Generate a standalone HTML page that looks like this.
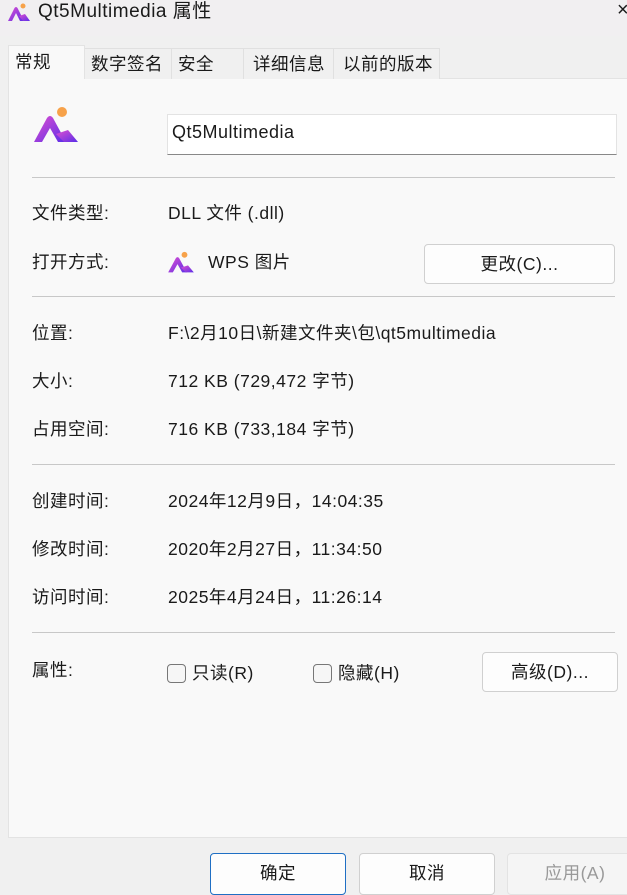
<!DOCTYPE html>
<html><head><meta charset="utf-8"><style>
*{margin:0;padding:0;box-sizing:border-box}
body{width:627px;height:892px;overflow:hidden;background:#f0f0f0;font-family:"Liberation Sans","Noto Sans CJK SC",sans-serif;font-size:17.5px;letter-spacing:0.5px;color:#1a1a1a;position:relative}
.a{position:absolute;white-space:nowrap;line-height:22px}
.title{left:0;top:0;width:627px;height:36px;background:#f1eff1}
.tab{position:absolute;top:48px;height:31px;border:1px solid #e0e0e0;border-bottom:none;background:#f0f0f0;font-size:17.5px;padding:4px 0 0 6px;line-height:22px}
.panel{left:8px;top:78px;width:630px;height:760px;background:#f9f9f9;border:1px solid #e3e3e3}
.hr{position:absolute;left:32px;width:583px;height:1px;background:#c8c8c8}
.btn{position:absolute;background:#fdfdfd;border:1px solid #d0d0d0;border-radius:4px;text-align:center;line-height:22px}
.cb{position:absolute;width:19px;height:19px;border:1px solid #777;border-radius:4px;background:#f6f6f6}
</style></head><body>
<div class="a title"></div>
<svg class="a" style="left:6px;top:3px" width="26" height="20" viewBox="0 0 48 40"><defs><linearGradient id="g" x1="0" y1="0" x2="1" y2="1"><stop offset="0" stop-color="#e04fd0"/><stop offset="1" stop-color="#5b2ee8"/></linearGradient></defs><path d="M2 36 L15 10 Q18 6 21 10 L34 36 L26 36 L18 20 L10 36Z" fill="url(#g)"/><path d="M24 26 L36 22 L46 36 L32 36Z" fill="url(#g)"/><circle cx="32" cy="6" r="5" fill="#f7a24a"/></svg>
<div class="a" style="left:38px;top:1px;font-size:19px">Qt5Multimedia 属性</div>
<div class="a" style="left:617px;top:-1px;font-size:20px">×</div>
<div class="a panel"></div>
<div class="tab" style="left:8px;top:45px;width:77px;height:34px;background:#f9f9f9;z-index:2;padding-top:5px;border-color:#e3e3e3">常规</div>
<div class="tab" style="left:84px;width:88px">数字签名</div>
<div class="tab" style="left:171px;width:73px">安全</div>
<div class="tab" style="left:243px;width:91px;padding-left:9px">详细信息</div>
<div class="tab" style="left:333px;width:107px;padding-left:9px">以前的版本</div>
<svg class="a" style="left:32px;top:106px" width="48" height="40" viewBox="0 0 48 40"><defs><linearGradient id="g2" x1="0" y1="0" x2="1" y2="1"><stop offset="0" stop-color="#e04fd0"/><stop offset="1" stop-color="#5b2ee8"/></linearGradient></defs><path d="M2 36 L15 12 Q18 8 21 12 L34 36 L26 36 L18 22 L10 36Z" fill="url(#g2)"/><path d="M24 28 L36 24 L46 36 L32 36Z" fill="url(#g2)"/><circle cx="30" cy="6" r="5" fill="#f7a24a"/></svg>
<div class="a" style="left:167px;top:114px;width:450px;height:41px;background:#fff;border:1px solid #e3e3e3;border-bottom:1px solid #888;padding:4px 0 0 4px;font-size:18px;line-height:26px">Qt5Multimedia</div>
<div class="hr" style="top:177px"></div>
<div class="a" style="left:32px;top:202px">文件类型:</div><div class="a" style="left:168px;top:202px">DLL 文件 (.dll)</div>
<div class="a" style="left:32px;top:251px">打开方式:</div>
<svg class="a" style="left:167px;top:251px" width="28" height="24" viewBox="0 0 48 40"><path d="M2 36 L15 12 Q18 8 21 12 L34 36 L26 36 L18 22 L10 36Z" fill="url(#g2)"/><path d="M24 28 L36 24 L46 36 L32 36Z" fill="url(#g2)"/><circle cx="30" cy="6" r="5" fill="#f7a24a"/></svg>
<div class="a" style="left:208px;top:251px">WPS 图片</div>
<div class="btn" style="left:424px;top:244px;width:191px;height:40px;padding-top:8px">更改(C)...</div>
<div class="hr" style="top:296px"></div>
<div class="a" style="left:32px;top:322px">位置:</div><div class="a" style="left:168px;top:322px">F:\2月10日\新建文件夹\包\qt5multimedia</div>
<div class="a" style="left:32px;top:370px">大小:</div><div class="a" style="left:168px;top:370px">712 KB (729,472 字节)</div>
<div class="a" style="left:32px;top:418px">占用空间:</div><div class="a" style="left:168px;top:418px">716 KB (733,184 字节)</div>
<div class="hr" style="top:464px"></div>
<div class="a" style="left:32px;top:490px">创建时间:</div><div class="a" style="left:168px;top:490px">2024年12月9日，14:04:35</div>
<div class="a" style="left:32px;top:538px">修改时间:</div><div class="a" style="left:168px;top:538px">2020年2月27日，11:34:50</div>
<div class="a" style="left:32px;top:586px">访问时间:</div><div class="a" style="left:168px;top:586px">2025年4月24日，11:26:14</div>
<div class="hr" style="top:632px"></div>
<div class="a" style="left:32px;top:659px">属性:</div>
<div class="cb" style="left:167px;top:664px"></div><div class="a" style="left:192px;top:662px">只读(R)</div>
<div class="cb" style="left:313px;top:664px"></div><div class="a" style="left:338px;top:662px">隐藏(H)</div>
<div class="btn" style="left:482px;top:652px;width:136px;height:40px;padding-top:8px">高级(D)...</div>
<div class="btn" style="left:210px;top:853px;width:136px;height:42px;padding-top:8px;border-color:#1f6fc4">确定</div>
<div class="btn" style="left:359px;top:853px;width:136px;height:42px;padding-top:8px">取消</div>
<div class="btn" style="left:507px;top:853px;width:136px;height:42px;padding-top:8px;color:#999;background:#f5f5f5;border-color:#e3e3e3">应用(A)</div>
</body></html>
